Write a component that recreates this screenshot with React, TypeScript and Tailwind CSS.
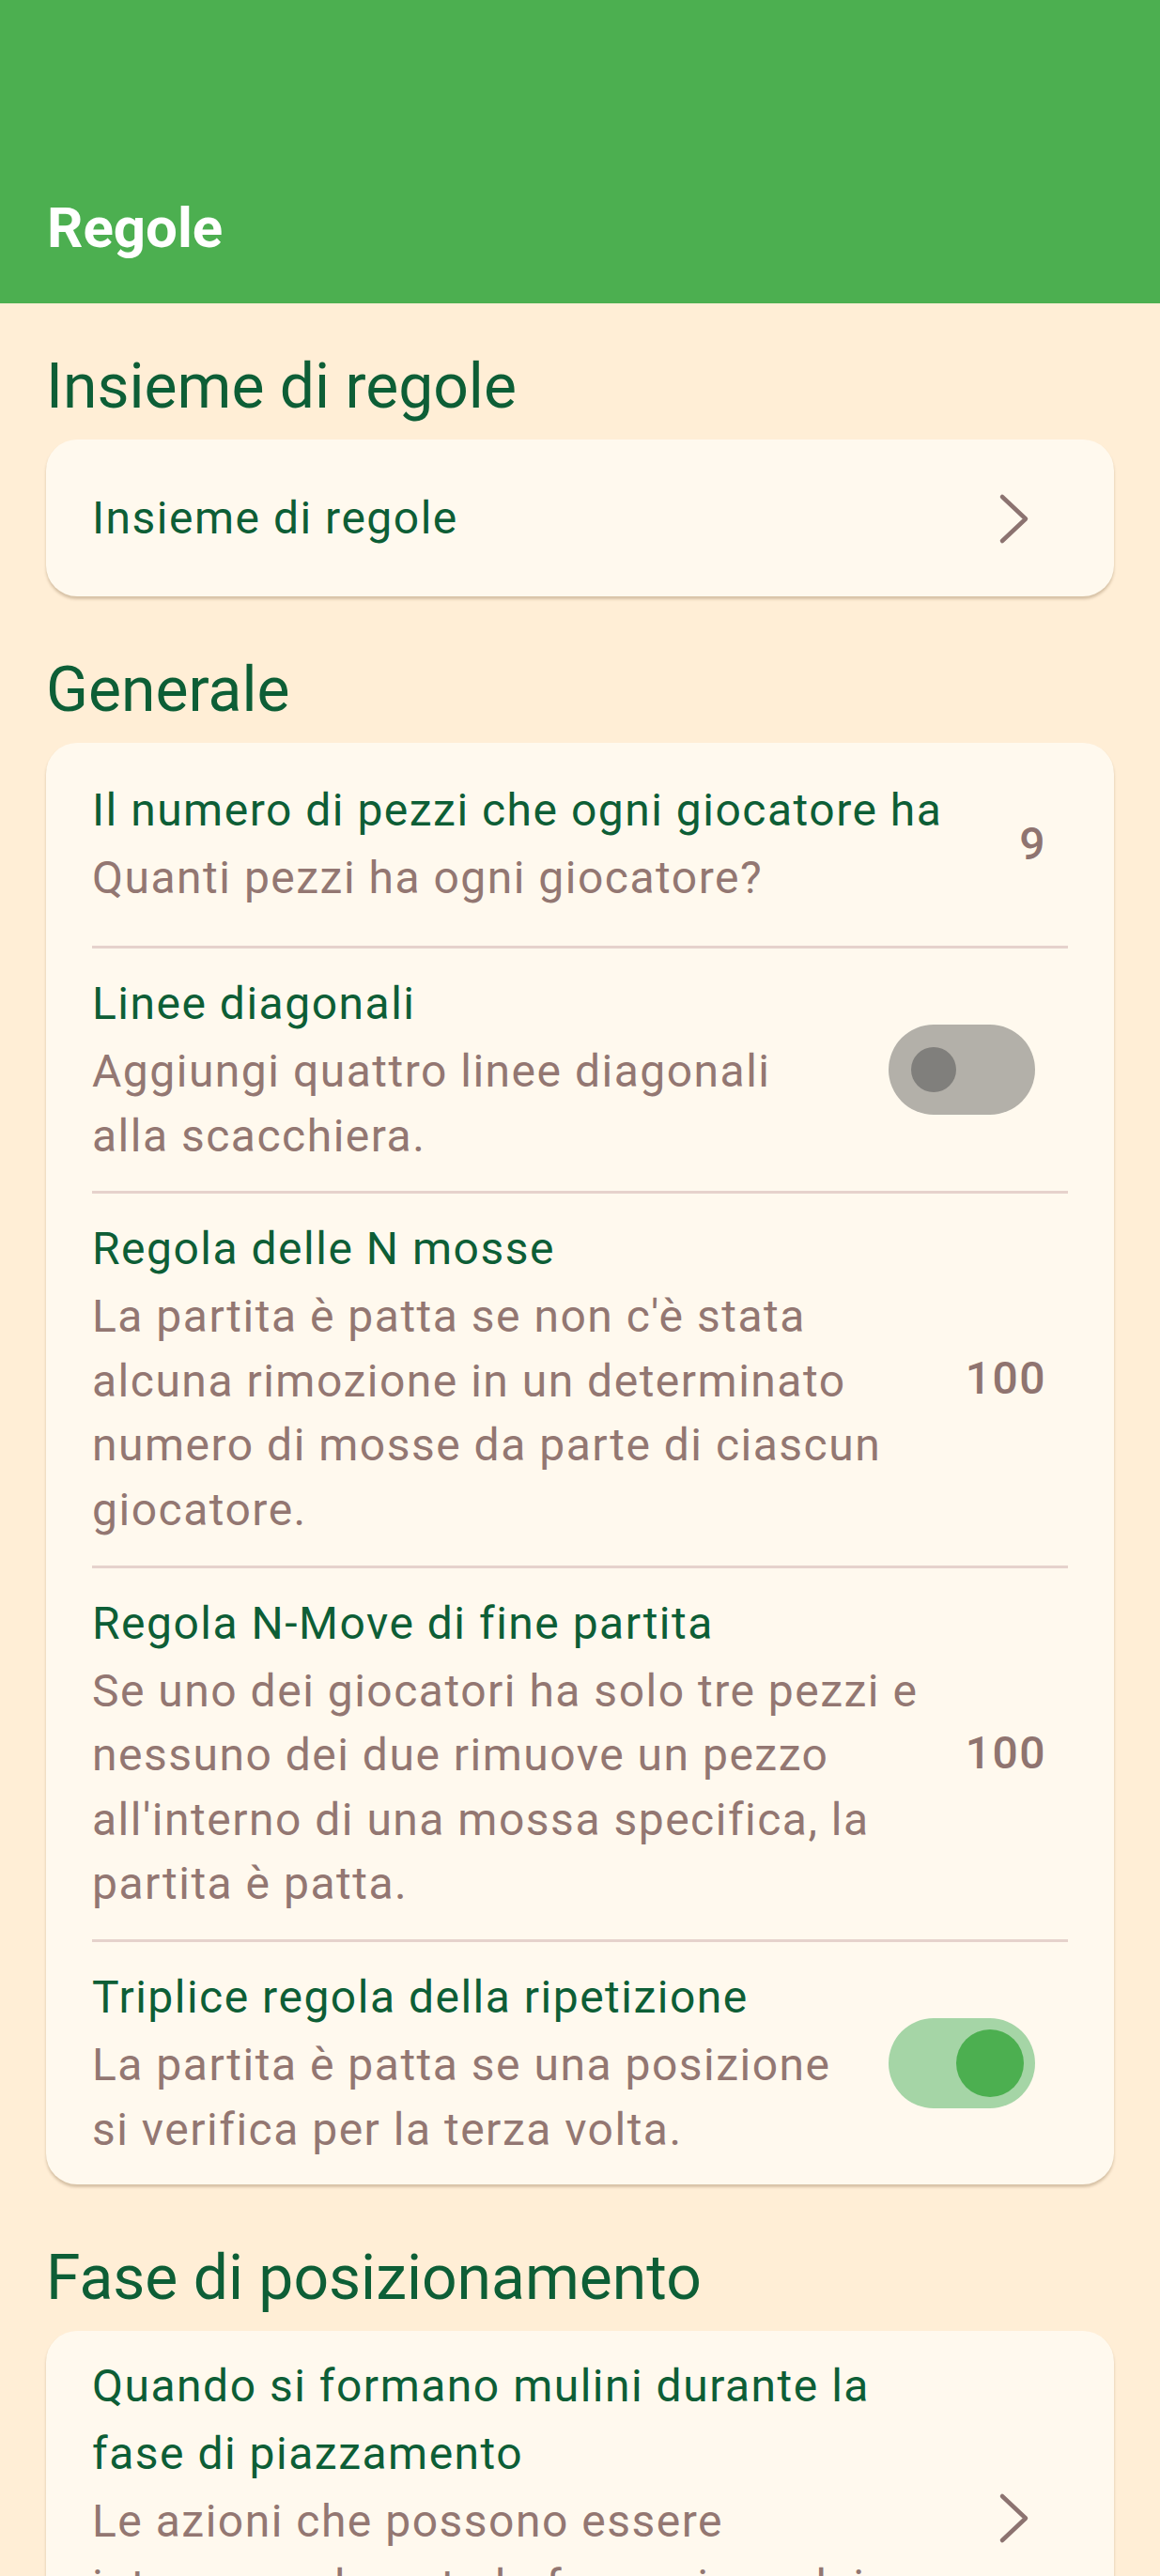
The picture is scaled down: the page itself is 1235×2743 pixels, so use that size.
import React from "react";

// colours
const TITLE = "text-[#0d5e36]";
const SUB = "text-[#937772]";

type Trailing =
  | { kind: "value"; value: string }
  | { kind: "switch"; on: boolean }
  | { kind: "chevron" };

type Rule = {
  title: string;
  subtitle?: string;
  trailing: Trailing;
};

const GENERAL: Rule[] = [
  {
    title: "Il numero di pezzi che ogni giocatore ha",
    subtitle: "Quanti pezzi ha ogni giocatore?",
    trailing: { kind: "value", value: "9" },
  },
  {
    title: "Linee diagonali",
    subtitle: "Aggiungi quattro linee diagonali alla scacchiera.",
    trailing: { kind: "switch", on: false },
  },
  {
    title: "Regola delle N mosse",
    subtitle:
      "La partita è patta se non c'è stata alcuna rimozione in un determinato numero di mosse da parte di ciascun giocatore.",
    trailing: { kind: "value", value: "100" },
  },
  {
    title: "Regola N-Move di fine partita",
    subtitle:
      "Se uno dei giocatori ha solo tre pezzi e nessuno dei due rimuove un pezzo all'interno di una mossa specifica, la partita è patta.",
    trailing: { kind: "value", value: "100" },
  },
  {
    title: "Triplice regola della ripetizione",
    subtitle: "La partita è patta se una posizione si verifica per la terza volta.",
    trailing: { kind: "switch", on: true },
  },
];

const PLACING: Rule[] = [
  {
    title: "Quando si formano mulini durante la fase di piazzamento",
    subtitle:
      "Le azioni che possono essere intraprese durante la formazione dei mulini nella fase di piazzamento.",
    trailing: { kind: "chevron" },
  },
];

const Chevron = () => (
  <div className="w-[72px] h-[72px] shrink-0 flex items-center justify-center">
    <svg width="72" height="72" viewBox="0 0 72 72" fill="none">
      <polyline
        points="25,13 50,36.5 25,60"
        stroke="#8c7370"
        strokeWidth="4.5"
        strokeLinecap="round"
        strokeLinejoin="round"
      />
    </svg>
  </div>
);

const Toggle = ({ on }: { on: boolean }) => (
  <div className="w-[180px] shrink-0 flex justify-center">
    {on ? (
      <div className="relative w-[156px] h-[96px] rounded-full bg-[#a5d5a6]">
        <div className="absolute right-[12px] top-[12px] w-[72px] h-[72px] rounded-full bg-[#4caf50]" />
      </div>
    ) : (
      <div className="relative w-[156px] h-[96px] rounded-full bg-[#b3b0a9]">
        <div className="absolute left-[24px] top-[24px] w-[48px] h-[48px] rounded-full bg-[#807f7c]" />
      </div>
    )}
  </div>
);

const TrailingItem = ({ trailing }: { trailing: Trailing }) => {
  if (trailing.kind === "value") {
    return (
      <span className="shrink-0 text-[48px] leading-[72px] font-medium tracking-[1.5px] text-[#8f7470]">
        {trailing.value}
      </span>
    );
  }
  if (trailing.kind === "switch") return <Toggle on={trailing.on} />;
  return <Chevron />;
};

const RuleRow = ({ rule }: { rule: Rule }) => (
  <div className="flex items-center gap-[48px] min-h-[216px] pt-[23px] pb-[24px] pl-[49px] pr-[72px]">
    <div className="flex-1 min-w-0">
      <div className={`text-[48px] leading-[72px] tracking-[1.5px] ${TITLE}`}>{rule.title}</div>
      {rule.subtitle && (
        <div className={`mt-[2px] text-[48px] leading-[68.6px] tracking-[1.5px] ${SUB}`}>{rule.subtitle}</div>
      )}
    </div>
    <TrailingItem trailing={rule.trailing} />
  </div>
);

const Card = ({ children }: { children: React.ReactNode }) => (
  <div className="rounded-[33px] bg-[#fff9ee] shadow-[0_3px_3px_rgba(90,60,20,0.25)] overflow-hidden">
    {children}
  </div>
);

const RuleCard = ({ rules }: { rules: Rule[] }) => (
  <Card>
    {rules.map((rule, idx) => (
      <div key={`rule-${idx}`}>
        {idx > 0 && <div className="mx-[49px] h-[3px] bg-[#e6d2cc]" />}
        <RuleRow rule={rule} />
      </div>
    ))}
  </Card>
);

const SectionHeading = ({ children, first }: { children: React.ReactNode; first?: boolean }) => (
  <h2
    className={`text-[66px] leading-[84px] font-normal mb-[14px] ${first ? "mt-[47px]" : "mt-[58px]"} ${TITLE}`}
  >
    {children}
  </h2>
);

export default function App() {
  return (
    <div className="min-h-[2743px] bg-[#ffeed6] font-['Roboto',sans-serif]">
      {/* HEADER */}
      <header className="h-[323px] bg-[#4caf50] flex items-end px-[50px] pb-[44px]">
        <h1 className="text-[60px] leading-[72px] font-bold text-white">Regole</h1>
      </header>

      <main className="px-[49px] pb-[80px]">
        {/* RULE SET */}
        <SectionHeading first>Insieme di regole</SectionHeading>
        <Card>
          <div className="h-[167px] flex items-center gap-[48px] pl-[49px] pr-[72px]">
            <div className={`flex-1 text-[48px] leading-[72px] tracking-[1.5px] ${TITLE}`}>
              Insieme di regole
            </div>
            <Chevron />
          </div>
        </Card>

        {/* GENERAL */}
        <SectionHeading>Generale</SectionHeading>
        <RuleCard rules={GENERAL} />

        {/* PLACING PHASE */}
        <SectionHeading>Fase di posizionamento</SectionHeading>
        <RuleCard rules={PLACING} />
      </main>
    </div>
  );
}
